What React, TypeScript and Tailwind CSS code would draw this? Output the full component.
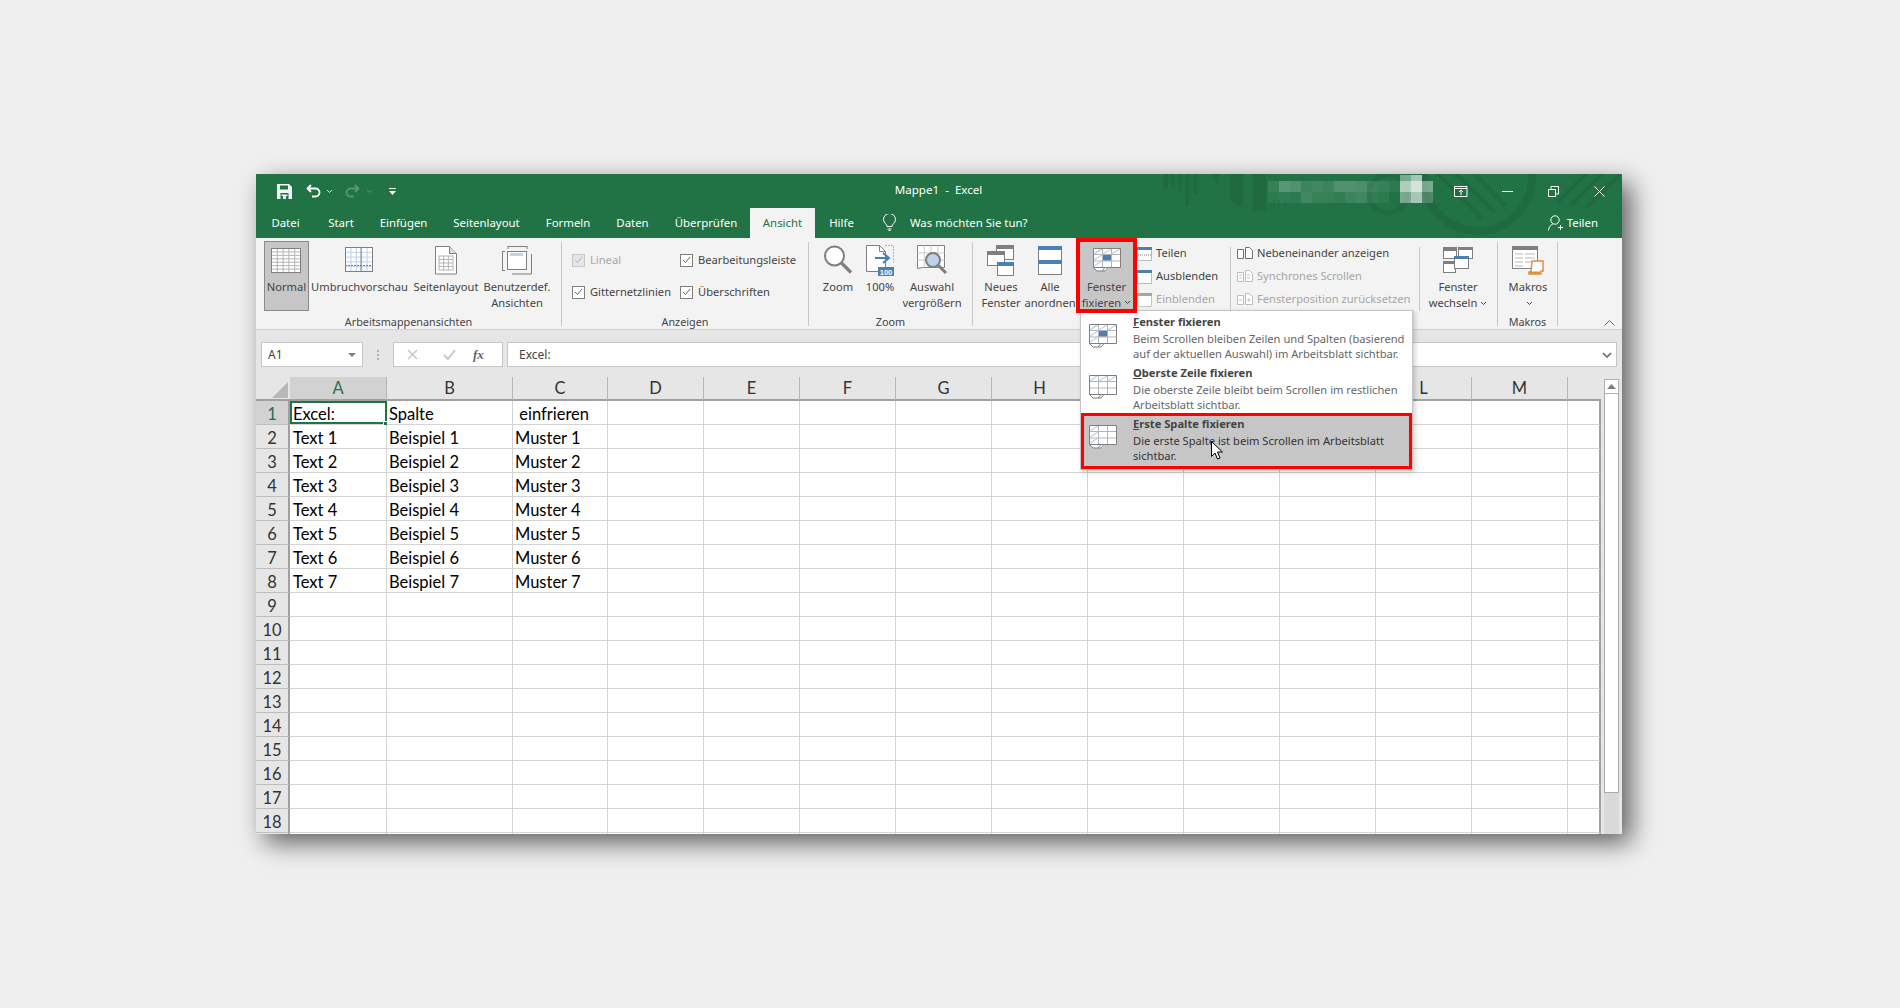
import type { ReactNode } from "react";

const GRAY = "#7f7f7f";
const LINE = "#b4b4b4";
const BLUE = "#4c7fb5";
const PALE = "#bcd3ea";
const UI = "font-['Noto_Sans','Open_Sans',sans-serif]";

const COLS = ["A", "B", "C", "D", "E", "F", "G", "H", "I", "J", "K", "L", "M", ""];
const ROWS: Record<number, string[]> = {
  1: ["Excel:", "Spalte", " einfrieren"],
  2: ["Text 1", "Beispiel 1", "Muster 1"],
  3: ["Text 2", "Beispiel 2", "Muster 2"],
  4: ["Text 3", "Beispiel 3", "Muster 3"],
  5: ["Text 4", "Beispiel 4", "Muster 4"],
  6: ["Text 5", "Beispiel 5", "Muster 5"],
  7: ["Text 6", "Beispiel 6", "Muster 6"],
  8: ["Text 7", "Beispiel 7", "Muster 7"],
};
const TABS = [
  { name: "Datei", w: "w-[59px]" },
  { name: "Start", w: "w-[52px]" },
  { name: "Einfügen", w: "w-[73px]" },
  { name: "Seitenlayout", w: "w-[93px]" },
  { name: "Formeln", w: "w-[70px]" },
  { name: "Daten", w: "w-[59px]" },
  { name: "Überprüfen", w: "w-[88px]" },
];

function GridLines({ x, y, w, h, cols, rows, color = LINE }: { x: number; y: number; w: number; h: number; cols: number; rows: number; color?: string }) {
  const out = [];
  for (let i = 1; i < cols; i++) {
    const px = x + (w * i) / cols;
    out.push(<line key={"c" + i} x1={px} y1={y} x2={px} y2={y + h} stroke={color} />);
  }
  for (let i = 1; i < rows; i++) {
    const py = y + (h * i) / rows;
    out.push(<line key={"r" + i} x1={x} y1={py} x2={x + w} y2={py} stroke={color} />);
  }
  return <>{out}</>;
}

function NormalIcon() {
  return (
    <svg width="31" height="26" viewBox="0 0 31 26" fill="none">
      <rect x="0.5" y="0.5" width="29" height="24" fill="#fff" stroke={GRAY} />
      <GridLines x={0.5} y={0.5} w={29} h={24} cols={5} rows={7} />
      <rect x="0.5" y="0.5" width="29" height="24" stroke={GRAY} />
    </svg>
  );
}

function BreakIcon() {
  return (
    <svg width="29" height="26" viewBox="0 0 29 26" fill="none">
      <rect x="0.5" y="0.5" width="27" height="24" fill="#fff" />
      <GridLines x={0.5} y={0.5} w={27} h={24} cols={5} rows={5} color={PALE} />
      <line x1="16" y1="0" x2="16" y2="25" stroke={GRAY} />
      <line x1="0" y1="18.5" x2="28" y2="18.5" stroke={GRAY} strokeDasharray="2 1" />
      <rect x="0.5" y="0.5" width="27" height="24" stroke={GRAY} />
    </svg>
  );
}

function PageIcon() {
  return (
    <svg width="22" height="29" viewBox="0 0 22 29" fill="none">
      <path d="M.5.5h14l7 7v20.5H.5z" fill="#fff" stroke={GRAY} />
      <path d="M14.5.5v7h7" fill="#ddd" stroke={GRAY} />
      <rect x="4" y="10" width="14" height="14" stroke={LINE} />
      <GridLines x={4} y={10} w={14} h={14} cols={3} rows={4} />
    </svg>
  );
}

function CustomViewIcon() {
  return (
    <svg width="30" height="29" viewBox="0 0 30 29" fill="none">
      <path d="M6 .5h19M6 0v3M25 0v3M.5 5v20M0 5.5h3M0 24.5h3" stroke={GRAY} />
      <rect x="5.5" y="5.5" width="19" height="18" fill="#fff" stroke={GRAY} strokeWidth="1" />
      <rect x="8" y="7" width="13" height="3" fill={PALE} />
      <path d="M29.5 8v20H10" stroke={GRAY} />
    </svg>
  );
}

function ZoomIcon() {
  return (
    <svg width="30" height="30" viewBox="0 0 30 30" fill="none">
      <circle cx="11.5" cy="11" r="9.5" fill="#fff" stroke={GRAY} strokeWidth="2" />
      <path d="M18.5 18l9.5 9.5" stroke={GRAY} strokeWidth="3.4" />
    </svg>
  );
}

function HundredIcon() {
  return (
    <svg width="28" height="31" viewBox="0 0 28 31" fill="none">
      <path d="M.5.5h13l6 6v20H.5z" fill="#fff" stroke={GRAY} />
      <path d="M13.5.5v6h6" stroke={GRAY} />
      <path d="M19 .5h8.5v17" stroke={LINE} strokeDasharray="2 1" />
      <path d="M9 13h13M17 8l6 5-6 5" stroke={BLUE} strokeWidth="2" />
      <rect x="12" y="22" width="16" height="9" fill={BLUE} />
      <text x="20" y="29.5" textAnchor="middle" fill="#fff" fontSize="7.5" fontWeight="700" fontFamily="Liberation Sans">100</text>
    </svg>
  );
}

function ZoomSelectionIcon() {
  return (
    <svg width="31" height="30" viewBox="0 0 31 30" fill="none">
      <path d="M.5.5h27v22h-22l-5 1z" fill="#fff" stroke={GRAY} />
      <GridLines x={0.5} y={0.5} w={27} h={22} cols={4} rows={3} color="#ccc" />
      <circle cx="16" cy="15" r="7" fill={PALE} stroke={GRAY} strokeWidth="2" />
      <path d="M21 20l8 8" stroke={GRAY} strokeWidth="3" />
    </svg>
  );
}

function NewWindowIcon() {
  return (
    <svg width="28" height="31" viewBox="0 0 28 31" fill="none">
      <rect x="9.5" y="0.5" width="17" height="14" fill="#fff" stroke={GRAY} />
      <rect x="9" y="0" width="18" height="4" fill={GRAY} />
      <rect x="0.5" y="6.5" width="17" height="14" fill="#fff" stroke={GRAY} />
      <rect x="0" y="6" width="18" height="4" fill={GRAY} />
      <rect x="10.5" y="17.5" width="16" height="13" fill="#fff" stroke={GRAY} />
      <rect x="10" y="17" width="17" height="4" fill={BLUE} />
    </svg>
  );
}

function ArrangeIcon() {
  return (
    <svg width="24" height="29" viewBox="0 0 24 29" fill="none">
      <rect x="0.5" y="0.5" width="23" height="28" fill="#fff" stroke={GRAY} />
      <rect x="0" y="0" width="24" height="4" fill={BLUE} />
      <rect x="0" y="14" width="24" height="4" fill={BLUE} />
    </svg>
  );
}

function FreezeIcon({ mode }: { mode: "both" | "row" | "col" }) {
  const rowHatch = mode !== "col";
  const colHatch = mode !== "row";
  return (
    <svg width="28" height="25" viewBox="0 0 28 25" fill="none">
      <path d="M.5.5h27v19H16l-3 3.500H4l-3.500-3.500z" fill="#fff" />
      <path d="M9.500 1v18.500M18.500 1v18.500M1 6.500h26.500M1 13h26.500" stroke={LINE} />
      {rowHatch && <path d="M1 6L8 1M10 6l8-5M19 6l8-5" stroke={PALE} strokeWidth="1.400" />}
      {colHatch && <path d="M1 12l8-5M1 18l8-5M1 6l8-5" stroke={PALE} strokeWidth="1.400" />}
      {mode === "both" && <rect x="10" y="7" width="8" height="5.500" fill={BLUE} />}
      <path d="M.5 19.500V.5h27v19H.5l3.500 3.500h5l3-3.500M9 23h3l3-3.500" stroke={GRAY} />
    </svg>
  );
}

function SwitchIcon() {
  return (
    <svg width="30" height="26" viewBox="0 0 30 26" fill="none">
      <rect x="0.5" y="0.5" width="13" height="11" fill="#fff" stroke={GRAY} />
      <rect x="0" y="0" width="14" height="4" fill={GRAY} />
      <rect x="15.5" y="0.5" width="14" height="11" fill="#fff" stroke={GRAY} />
      <rect x="15" y="0" width="15" height="3" fill={GRAY} />
      <rect x="0.5" y="14.500" width="12" height="11" fill="#fff" stroke={GRAY} />
      <rect x="0" y="14" width="13" height="3" fill={GRAY} />
      <rect x="11.5" y="9.500" width="14" height="12" fill="#fff" stroke={GRAY} />
      <rect x="11" y="9" width="15" height="3" fill={BLUE} />
    </svg>
  );
}

function MacroIcon() {
  return (
    <svg width="32" height="29" viewBox="0 0 32 29" fill="none">
      <rect x="0.5" y="0.5" width="25" height="22" fill="#fff" stroke={GRAY} />
      <rect x="0" y="0" width="26" height="4" fill={GRAY} />
      <path d="M3 8h8M13 8h10M3 12h8M13 12h10M3 16h8M13 16h6M3 20h8" stroke="#b9b9b9" />
      <path d="M20 15h11v10h-2v3H17v-2h2z" fill="#fff" stroke="#e0913d" strokeWidth="1.500" />
      <path d="M17 25.500h11V28H17z" fill="#e0913d" />
    </svg>
  );
}

function SmallIcon({ kind }: { kind: "split" | "hide" | "unhide" }) {
  const bar = kind === "unhide" ? "#a6a6a6" : BLUE;
  const stroke = kind === "unhide" ? "#c4c4c4" : GRAY;
  return (
    <svg width="15" height="14" viewBox="0 0 15 14" fill="none">
      <path d="M.5.5h14v13H.5z" fill="#fff" stroke={stroke} strokeDasharray={kind === "unhide" ? undefined : "1 1"} />
      <rect x="0" y="0" width="15" height="3" fill={bar} />
      {kind === "split" && <path d="M1 8h13" stroke={GRAY} strokeDasharray="1 1" />}
    </svg>
  );
}

function SideIcon({ kind }: { kind: "side" | "sync" | "reset" }) {
  const c = kind === "side" ? "#6f6f6f" : "#bdbdbd";
  return (
    <svg width="16" height="14" viewBox="0 0 16 14" fill="none">
      <path d="M.5 2.500h6v9h-6zM8.500.5h4l3 3v8h-7z" fill="#fff" stroke={c} />
      {kind === "sync" && <path d="M2 5h3M2 8h3M10 5h3M10 8h3" stroke={c} />}
      {kind === "reset" && <path d="M2 7h3M10 7h3M12 5v4" stroke={c} />}
    </svg>
  );
}

function Chevron({ className = "" }: { className?: string }) {
  return (
    <svg width="7" height="5" viewBox="0 0 7 5" fill="none" className={className}>
      <path d="M1 1l2.500 2.500L6 1" stroke="currentColor" />
    </svg>
  );
}

function TitleDecor() {
  return (
    <svg width="472" height="64" viewBox="0 0 472 64" className="absolute top-0 right-0" fill="#1f6a41">
      <defs>
        <clipPath id="ringClip">
          <circle cx="328" cy="3" r="52" />
        </clipPath>
      </defs>
      <rect x="13" y="0" width="5" height="15" />
      <rect x="21" y="0" width="4" height="13" />
      <rect x="28" y="0" width="4" height="17" />
      <rect x="35" y="0" width="4" height="32" />
      <rect x="43" y="0" width="4" height="20" />
      <path d="M63 0h6v14z" />
      <path d="M80 0h13v33L80 27z" />
      <rect x="103" y="0" width="13" height="37" />
      <rect x="123" y="26" width="2" height="8" />
      <rect x="128" y="26" width="2" height="7" />
      <rect x="134" y="26" width="2" height="6" />
      <circle cx="238" cy="20" r="19" fill="none" stroke="#1f6a41" strokeWidth="5" />
      <circle cx="328" cy="3" r="54" fill="none" stroke="#1f6a41" strokeWidth="8" />
      <g clipPath="url(#ringClip)" stroke="#1f6a41" strokeWidth="4">
        <path d="M282 -6l50 50M294 -12l50 50M306 -18l50 50" />
      </g>
      <path d="M408 28L436 0M420 32L452 0M436 34L470 0" stroke="#1f6a41" strokeWidth="4" />
    </svg>
  );
}

function BlurredAccount() {
  const top = [0.1, 0.25, 0.22, 0.12, 0.15, 0.12, 0.22, 0.22, 0.2, 0.12, 0.1, 0.05, 0.65, 0.8, 0.4];
  const bottom = [0.05, 0.07, 0.05, 0.15, 0.1, 0.1, 0.08, 0.12, 0.15, 0.08, 0.05, 0, 0.4, 0.6, 0.2];
  return (
    <svg width="165" height="30" viewBox="0 0 165 30" className="absolute top-0 left-[1012px]">
      <rect x="132" y="1" width="11" height="6" fill="#fff" opacity="0.4" />
      <rect x="143" y="1" width="11" height="6" fill="#fff" opacity="0.6" />
      {top.map((o, i) => (
        <rect key={"t" + i} x={i * 11} y="7" width="11" height="11" fill="#fff" opacity={o} />
      ))}
      {bottom.map((o, i) => (
        <rect key={"b" + i} x={i * 11} y="18" width="11" height="11" fill="#fff" opacity={o} />
      ))}
    </svg>
  );
}

function TitleBar() {
  return (
    <div className="relative flex h-[34px] items-center text-white">
      <BlurredAccount />
      <div className="relative flex flex-1 items-center pl-[21px]">
        <svg width="15" height="15" viewBox="0 0 15 15" fill="none">
          <path d="M0 0h12l3 3v12H0z" fill="#f2f2f2" />
          <path d="M3 1.500h8v4H3zM3.500 9h8v6h-8z" fill="#217346" />
          <rect x="6" y="12" width="3" height="3" fill="#f2f2f2" />
          <rect x="4.500" y="10.500" width="6" height="1.500" fill="#f2f2f2" />
        </svg>
        <svg width="15" height="14" viewBox="0 0 15 14" fill="none" className="ml-[14px]">
          <path d="M5 1L1.500 4.500 5 8M2 4.500h7.500a4 4 0 0 1 0 8H6" stroke="#fff" strokeWidth="1.800" />
        </svg>
        <Chevron className="ml-[5px] text-[#d8e8de]" />
        <svg width="15" height="14" viewBox="0 0 15 14" fill="none" className="ml-[12px]">
          <path d="M10 1l3.500 3.500L10 8M13 4.500H5.500a4 4 0 0 0 0 8H9" stroke="#5a9577" strokeWidth="1.800" />
        </svg>
        <Chevron className="ml-[6px] text-[#5a9577]" />
        <svg width="7" height="7" viewBox="0 0 7 7" fill="#fff" className="ml-[16px]">
          <rect x="0" y="0" width="7" height="1" />
          <path d="M0 3h7L3.500 7z" />
        </svg>
      </div>
      <div className={`relative -ml-[22px] pb-[2px] text-[11.600px] ${UI}`}>Mappe1&nbsp; - &nbsp;Excel</div>
      <div className="relative flex flex-1 items-center justify-end">
        <svg width="14" height="11" viewBox="0 0 14 11" fill="none" className="mr-[34px]">
          <path d="M.5.5h12.500v10H.5zM1 2.500h12M7 9V4.500M5 6l2-2 2 2" stroke="#fff" />
        </svg>
        <svg width="11" height="1" viewBox="0 0 11 1" className="mr-[35px]">
          <rect width="11" height="1" fill="#fff" />
        </svg>
        <svg width="11" height="11" viewBox="0 0 11 11" fill="none" className="mr-[35px]">
          <path d="M.5 3.500h7v7h-7zM3 3V.5h7.500V8H8" stroke="#fff" />
        </svg>
        <svg width="11" height="11" viewBox="0 0 11 11" fill="none" className="mr-[17px]">
          <path d="M.5.5l10 10M10.500.5l-10 10" stroke="#fff" />
        </svg>
      </div>
    </div>
  );
}

function TabBar() {
  return (
    <div className={`relative flex h-[30px] items-stretch text-[11.400px] text-white ${UI}`}>
      {TABS.map((t) => (
        <div key={t.name} className={`flex items-center justify-center ${t.w}`}>{t.name}</div>
      ))}
      <div className="flex w-[65px] items-center justify-center bg-[#f3f3f3] text-[#217346]">Ansicht</div>
      <div className="flex w-[53px] items-center justify-center">Hilfe</div>
      <svg width="13" height="17" viewBox="0 0 13 17" fill="none" className="mt-[6px] ml-[15px]">
        <path d="M4 12.500C4 10 .5 9 .5 5.500a6 6 0 0 1 12 0C12.500 9 9 10 9 12.500zM4.500 15h4M5.500 16.500h2" stroke="#fff" />
      </svg>
      <div className="ml-[14px] flex items-center">Was möchten Sie tun?</div>
      <div className="ml-auto mr-[24px] flex items-center">
        <svg width="15" height="16" viewBox="0 0 15 16" fill="none" className="mr-[4px]">
          <circle cx="7" cy="5" r="4.200" stroke="#fff" />
          <path d="M.5 15.500C1 11 3.500 9.500 5 9M10 12.500h5M12.500 10v5" stroke="#fff" />
        </svg>
        Teilen
      </div>
    </div>
  );
}

function LargeButton({ icon, lines, w, caret, dim, active }: { icon: ReactNode; lines: string[]; w: string; caret?: boolean; dim?: boolean; active?: boolean }) {
  return (
    <div className={`flex h-[70px] shrink-0 flex-col items-center ${w} ${active ? "border border-[#8a8a8a] bg-[#c6c6c6]" : ""} ${dim ? "text-[#a6a6a6]" : "text-[#444]"}`}>
      <div className={`flex w-full shrink-0 items-center justify-center ${active ? "h-[37px]" : "h-[38px]"}`}>{icon}</div>
      {lines.map((l, i) => (
        <div key={l} className="flex h-[16px] items-center whitespace-nowrap leading-none">
          {l}
          {caret && i === lines.length - 1 && <Chevron className="ml-[3px]" />}
        </div>
      ))}
    </div>
  );
}

function Group({ label, w, children, border = true }: { label: string; w: string; children: ReactNode; border?: boolean }) {
  return (
    <div className={`flex shrink-0 ${w} mt-[4px] h-[84px] flex-col ${border ? "border-r border-[#c6c6c6]" : ""}`}>
      <div className="-mt-[1px] h-[71px] shrink-0">{children}</div>
      <div className="flex flex-1 items-center justify-center pt-[5px] text-[10.800px] leading-none text-[#444]">{label}</div>
    </div>
  );
}

function Check({ label, disabled }: { label: string; disabled?: boolean }) {
  return (
    <div className={`flex h-[32px] items-center gap-[5px] ${disabled ? "text-[#a6a6a6]" : "text-[#444]"}`}>
      <span className={`flex h-[13px] w-[13px] items-center justify-center border ${disabled ? "border-[#c6c6c6] bg-[#e6e6e6]" : "border-[#7f7f7f] bg-white"}`}>
        <svg width="9" height="8" viewBox="0 0 9 8" fill="none">
          <path d="M1 4l2.500 2.500L8 1" stroke={disabled ? "#b4b4b4" : "#666"} />
        </svg>
      </span>
      {label}
    </div>
  );
}

function SmallRow({ icon, label, dim }: { icon: ReactNode; label: string; dim?: boolean }) {
  return (
    <div className={`flex h-[23px] w-full items-center whitespace-nowrap ${dim ? "text-[#a6a6a6]" : "text-[#444]"}`}>
      <span className="mr-[4px] flex">{icon}</span>
      {label}
    </div>
  );
}

function Ribbon() {
  return (
    <div className={`flex h-[92px] border-b border-[#cfcfcf] bg-[#f3f3f3] text-[11.150px] ${UI}`}>
      <Group label="Arbeitsmappenansichten" w="w-[306px]">
        <div className="flex pl-[8px]">
          <LargeButton icon={<NormalIcon />} lines={["Normal"]} w="w-[45px]" active />
          <LargeButton icon={<BreakIcon />} lines={["Umbruchvorschau"]} w="w-[101px]" />
          <LargeButton icon={<PageIcon />} lines={["Seitenlayout"]} w="w-[72px]" />
          <LargeButton icon={<CustomViewIcon />} lines={["Benutzerdef.", "Ansichten"]} w="w-[70px]" />
        </div>
      </Group>
      <Group label="Anzeigen" w="w-[247px]">
        <div className="grid grid-cols-[108px_1fr] pt-[3px] pl-[10px]">
          <Check label="Lineal" disabled />
          <Check label="Bearbeitungsleiste" />
          <Check label="Gitternetzlinien" />
          <Check label="Überschriften" />
        </div>
      </Group>
      <Group label="Zoom" w="w-[164px]">
        <div className="flex pl-[9px]">
          <LargeButton icon={<ZoomIcon />} lines={["Zoom"]} w="w-[40px]" />
          <LargeButton icon={<HundredIcon />} lines={["100%"]} w="w-[44px]" />
          <LargeButton icon={<ZoomSelectionIcon />} lines={["Auswahl", "vergrößern"]} w="w-[60px]" />
        </div>
      </Group>
      <Group label="" w="w-[525px]">
        <div className="flex pl-[5px]">
          <LargeButton icon={<NewWindowIcon />} lines={["Neues", "Fenster"]} w="w-[46px]" />
          <LargeButton icon={<ArrangeIcon />} lines={["Alle", "anordnen"]} w="w-[52px]" />
          <div className="relative w-[61px] shrink-0 px-[3px]">
            <LargeButton icon={<FreezeIcon mode="both" />} lines={["Fenster", "fixieren"]} w="w-full" caret active />
            <div className="absolute inset-x-0 -top-[3px] z-20 h-[75px] border-4 border-[#ff0000]" />
          </div>
          <div className="mt-[6px] mb-[8px] w-[94px] shrink-0 border-r border-[#c6c6c6]">
            <div className="-mt-[5px]">
              <SmallRow icon={<SmallIcon kind="split" />} label="Teilen" />
              <SmallRow icon={<SmallIcon kind="hide" />} label="Ausblenden" />
              <SmallRow dim icon={<SmallIcon kind="unhide" />} label="Einblenden" />
            </div>
          </div>
          <div className="mt-[6px] mb-[8px] w-[189px] shrink-0 border-r border-[#c6c6c6] pl-[6px]">
            <div className="-mt-[5px]">
              <SmallRow icon={<SideIcon kind="side" />} label="Nebeneinander anzeigen" />
              <SmallRow dim icon={<SideIcon kind="sync" />} label="Synchrones Scrollen" />
              <SmallRow dim icon={<SideIcon kind="reset" />} label="Fensterposition zurücksetzen" />
            </div>
          </div>
          <LargeButton icon={<SwitchIcon />} lines={["Fenster", "wechseln"]} w="w-[76px]" caret />
        </div>
      </Group>
      <Group label="Makros" w="w-[60px]">
        <LargeButton icon={<MacroIcon />} lines={["Makros", ""]} w="w-[60px]" caret />
      </Group>
      <div className="relative flex-1">
        <svg width="11" height="6" viewBox="0 0 11 6" fill="none" className="absolute right-[7px] bottom-[3px]">
          <path d="M.5 5.500l5-5 5 5" stroke="#666" />
        </svg>
      </div>
    </div>
  );
}

function FormulaBar() {
  return (
    <div className={`flex h-[47px] items-start bg-[#e6e6e6] pt-[12px] pl-[5px] pr-[5px] text-[12px] text-[#444] ${UI}`}>
      <div className="flex h-[25px] w-[102px] items-center justify-between border border-[#c6c6c6] bg-white px-[6px]">
        A1
        <svg width="8" height="4" viewBox="0 0 8 4">
          <path d="M0 0h8L4 4z" fill="#808080" />
        </svg>
      </div>
      <div className="flex h-[25px] w-[30px] flex-col items-center justify-center gap-[2px]">
        <span className="h-[2px] w-[2px] bg-[#b0b0b0]" />
        <span className="h-[2px] w-[2px] bg-[#b0b0b0]" />
        <span className="h-[2px] w-[2px] bg-[#b0b0b0]" />
      </div>
      <div className="flex h-[25px] w-[110px] items-center border border-[#c6c6c6] bg-white pl-[13px]">
        <svg width="11" height="11" viewBox="0 0 11 11" fill="none">
          <path d="M1 1l9 9M10 1l-9 9" stroke="#c8c8c8" strokeWidth="1.500" />
        </svg>
        <svg width="13" height="11" viewBox="0 0 13 11" fill="none" className="ml-[25px]">
          <path d="M1 6l4 4 7-9" stroke="#c8c8c8" strokeWidth="2" />
        </svg>
        <span className="ml-[17px] font-['Liberation_Serif',serif] text-[13px] font-bold italic text-[#666]">fx</span>
      </div>
      <div className="ml-[4px] flex h-[25px] flex-1 items-center justify-between border border-[#c6c6c6] bg-white pl-[11px] pr-[4px]">
        Excel:
        <svg width="10" height="6" viewBox="0 0 10 6" fill="none">
          <path d="M1 1l4 4 4-4" stroke="#666" strokeWidth="1.600" />
        </svg>
      </div>
    </div>
  );
}

function Sheet() {
  const rowNums = Array.from({ length: 19 }, (_, i) => i + 1);
  return (
    <div className="flex flex-1 overflow-hidden bg-[#e6e6e6] font-['Lato','Carlito',sans-serif] text-[16.500px] text-black">
      <div className="grid w-[1345px] shrink-0 auto-rows-[24px] grid-cols-[34px_97px_126px_95px_repeat(10,96px)_33px] content-start">
        <div className="flex items-end justify-end border-b-2 border-[#a0a0a0] pr-[2px] pb-[1px]">
          <svg width="16" height="16" viewBox="0 0 16 16">
            <path d="M16 0v16H0z" fill="#b7b7b7" />
          </svg>
        </div>
        {COLS.map((c, i) => (
          <div
            key={"h" + i}
            className={`flex items-center justify-center border-r border-b-2 border-r-[#b5b5b5] border-b-[#a0a0a0] pt-[1px] ${i === 0 ? "bg-[#d2d2d2] text-[#217346]" : "text-[#333]"} ${i === COLS.length - 1 ? "border-r-0" : ""}`}
          >
            {c}
          </div>
        ))}
        {rowNums.map((r) => (
          <Row key={r} r={r} />
        ))}
      </div>
      <div className="flex w-[21px] flex-col pt-[2px] pr-[3px] pl-[3px]">
        <div className="flex h-[15px] items-center justify-center border border-[#b0b0b0] bg-white">
          <svg width="9" height="5" viewBox="0 0 9 5">
            <path d="M0 5h9L4.500 0z" fill="#808080" />
          </svg>
        </div>
        <div className="h-[399px] border-x border-b border-[#ababab] bg-white" />
        <div className="flex-1 bg-[#d9d9d9]" />
      </div>
    </div>
  );
}

function Row({ r }: { r: number }) {
  const cells = ROWS[r] ?? [];
  return (
    <>
      <div className={`flex items-center justify-center border-r-2 border-b border-r-[#a0a0a0] border-b-[#bdbdbd] pt-[4px] leading-none ${r === 1 ? "bg-[#d2d2d2] text-[#217346]" : "text-[#333]"}`}>
        {r === 19 ? "" : r}
      </div>
      {COLS.map((_, i) => (
        <div
          key={i}
          className={`relative flex items-center border-r border-b border-[#d4d4d4] bg-white pt-[4px] leading-none whitespace-pre ${i === 0 ? "pl-[3px]" : "pl-[2px]"} ${i === COLS.length - 1 ? "border-r-2 border-r-[#a0a0a0]" : ""}`}
        >
          {cells[i] ?? ""}
          {r === 1 && i === 0 && (
            <>
              <div className="absolute inset-y-0 left-0 -right-[1px] border-2 border-[#217346]" />
              <div className="absolute -right-[3px] -bottom-[3px] h-[6px] w-[6px] border border-white bg-[#217346]" />
            </>
          )}
        </div>
      ))}
    </>
  );
}

function MenuItem({ mode, hot, rest, desc, selected }: { mode: "both" | "row" | "col"; hot: string; rest: string; desc: string[]; selected?: boolean }) {
  return (
    <div className={`flex ${selected ? "h-[56px] border-[3px] border-[#ff0000] bg-[#c6c6c6]" : "h-[51px]"}`}>
      <div className={`flex shrink-0 justify-start ${selected ? "w-[49px] pt-[9px] pl-[5px]" : "w-[52px] pt-[13px] pl-[8px]"}`}>
        <FreezeIcon mode={mode} />
      </div>
      <div className={`${selected ? "" : "pt-[3px]"} text-[11.150px] leading-[15px] whitespace-nowrap`}>
        <div className="mb-[2px] font-bold text-[#444]">
          <span className="underline">{hot}</span>
          {rest}
        </div>
        {desc.map((d) => (
          <div key={d} className={selected ? "text-[#333]" : "text-[#666]"}>{d}</div>
        ))}
      </div>
    </div>
  );
}

export default function App() {
  return (
    <div className="h-[1008px] w-[1900px] overflow-hidden bg-[#efefef] pt-[174px] pl-[256px]">
      <div className="relative flex h-[660px] w-[1366px] flex-col bg-[#e6e6e6] shadow-[9px_9px_24px_rgba(0,0,0,0.6)]">
        <div className="relative bg-[#217346]">
          <TitleDecor />
          <TitleBar />
          <TabBar />
        </div>
        <Ribbon />
        <FormulaBar />
        <Sheet />
        <div className={`absolute top-[136px] left-[824px] z-10 w-[333px] border border-[#c6c6c6] bg-white shadow-[2px_2px_5px_rgba(0,0,0,0.2)] ${UI}`}>
          <MenuItem mode="both" hot="F" rest="enster fixieren" desc={["Beim Scrollen bleiben Zeilen und Spalten (basierend", "auf der aktuellen Auswahl) im Arbeitsblatt sichtbar."]} />
          <MenuItem mode="row" hot="O" rest="berste Zeile fixieren" desc={["Die oberste Zeile bleibt beim Scrollen im restlichen", "Arbeitsblatt sichtbar."]} />
          <MenuItem mode="col" hot="E" rest="rste Spalte fixieren" desc={["Die erste Spalte ist beim Scrollen im Arbeitsblatt", "sichtbar."]} selected />
        </div>
        <svg width="13" height="20" viewBox="0 0 13 20" className="absolute top-[267px] left-[955px] z-30">
          <path d="M.5.5v15l3.500-3.500 2.500 6 2.500-1-2.500-6h5z" fill="#fff" stroke="#000" />
        </svg>
      </div>
    </div>
  );
}
